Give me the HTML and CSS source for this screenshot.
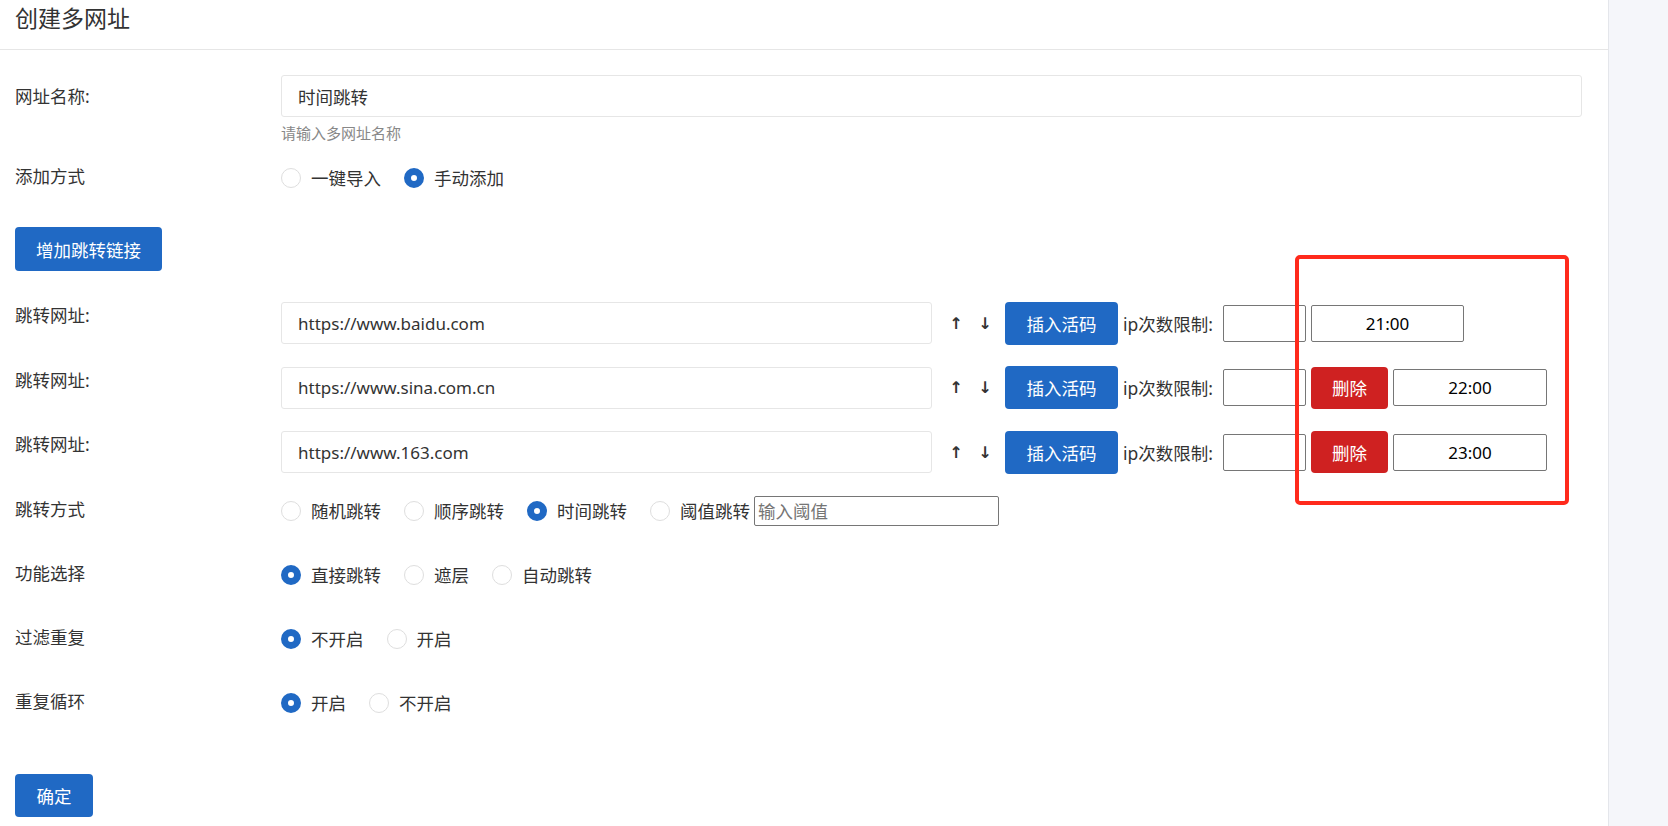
FILE: index.html
```html
<!DOCTYPE html>
<html lang="zh-CN">
<head>
    <meta charset="UTF-8">
    <meta name="viewport" content="width=device-width, initial-scale=1.0">
    <title>创建多网址</title>
    <link rel="stylesheet" href="styles.css">
</head>
<body>
    <div class="page">
        <div class="main">
            <div class="page-header">
                <h1>创建多网址</h1>
            </div>

            <form class="form">
                <div class="form-row row-name">
                    <label class="form-label" for="name">网址名称:</label>
                    <div class="form-field">
                        <input type="text" id="name" class="text-input name-input" value="时间跳转">
                        <div class="help">请输入多网址名称</div>
                    </div>
                </div>

                <div class="form-row row-radio">
                    <label class="form-label">添加方式</label>
                    <div class="radio-group">
                        <label class="radio"><input type="radio" name="mode">一键导入</label>
                        <label class="radio"><input type="radio" name="mode" checked>手动添加</label>
                    </div>
                </div>

                <div class="form-row row-add">
                    <button type="button" class="btn btn-blue btn-add">增加跳转链接</button>
                </div>

                <div class="form-row row-url">
                    <label class="form-label">跳转网址:</label>
                    <div class="url-line">
                        <input type="text" class="text-input url-input" value="https://www.baidu.com">
                        <div class="arrows"><span class="arrow">↑</span><span class="arrow">↓</span></div>
                        <button type="button" class="btn btn-blue">插入活码</button>
                        <span class="ip-label">ip次数限制:</span>
                        <input type="text" class="plain-input ip-input">
                        <input type="text" class="plain-input time-input time-first" value="21:00">
                    </div>
                </div>

                <div class="form-row row-url">
                    <label class="form-label">跳转网址:</label>
                    <div class="url-line">
                        <input type="text" class="text-input url-input" value="https://www.sina.com.cn">
                        <div class="arrows"><span class="arrow">↑</span><span class="arrow">↓</span></div>
                        <button type="button" class="btn btn-blue">插入活码</button>
                        <span class="ip-label">ip次数限制:</span>
                        <input type="text" class="plain-input ip-input">
                        <button type="button" class="btn btn-red">删除</button>
                        <input type="text" class="plain-input time-input" value="22:00">
                    </div>
                </div>

                <div class="form-row row-url">
                    <label class="form-label">跳转网址:</label>
                    <div class="url-line">
                        <input type="text" class="text-input url-input" value="https://www.163.com">
                        <div class="arrows"><span class="arrow">↑</span><span class="arrow">↓</span></div>
                        <button type="button" class="btn btn-blue">插入活码</button>
                        <span class="ip-label">ip次数限制:</span>
                        <input type="text" class="plain-input ip-input">
                        <button type="button" class="btn btn-red">删除</button>
                        <input type="text" class="plain-input time-input" value="23:00">
                    </div>
                </div>

                <div class="form-row row-radio">
                    <label class="form-label">跳转方式</label>
                    <div class="radio-group">
                        <label class="radio"><input type="radio" name="jump">随机跳转</label>
                        <label class="radio"><input type="radio" name="jump">顺序跳转</label>
                        <label class="radio"><input type="radio" name="jump" checked>时间跳转</label>
                        <label class="radio radio-last"><input type="radio" name="jump">阈值跳转</label>
                        <input type="text" class="plain-input limit-input" placeholder="输入阈值">
                    </div>
                </div>

                <div class="form-row row-radio">
                    <label class="form-label">功能选择</label>
                    <div class="radio-group">
                        <label class="radio"><input type="radio" name="func" checked>直接跳转</label>
                        <label class="radio"><input type="radio" name="func">遮层</label>
                        <label class="radio"><input type="radio" name="func">自动跳转</label>
                    </div>
                </div>

                <div class="form-row row-radio">
                    <label class="form-label">过滤重复</label>
                    <div class="radio-group">
                        <label class="radio"><input type="radio" name="filter" checked>不开启</label>
                        <label class="radio"><input type="radio" name="filter">开启</label>
                    </div>
                </div>

                <div class="form-row row-radio row-loop">
                    <label class="form-label">重复循环</label>
                    <div class="radio-group">
                        <label class="radio"><input type="radio" name="loop" checked>开启</label>
                        <label class="radio"><input type="radio" name="loop">不开启</label>
                    </div>
                </div>

                <button type="submit" class="btn btn-blue">确定</button>
            </form>

            <div class="annot"></div>
        </div>
        <div class="sidebar"></div>
    </div>
</body>
</html>
```

FILE: styles.css
```css
* {
    margin: 0;
    padding: 0;
    box-sizing: border-box;
}

body {
    font-family: "Noto Sans", "Noto Sans CJK SC", sans-serif;
    font-size: 17.5px;
    color: #333333;
    background-color: #ffffff;
}

.page {
    display: flex;
    height: 100vh;
    overflow: hidden;
}

.main {
    flex: 1;
    position: relative;
}

.sidebar {
    width: 60px;
    background-color: #f5f6fa;
    border-left: 1px solid #e4e6eb;
}

.page-header {
    height: 50px;
    padding: 0 15px;
    border-bottom: 1px solid #e6e6e6;
}

.page-header h1 {
    font-size: 23px;
    font-weight: normal;
    line-height: 36px;
    color: #333333;
}

.form {
    padding: 25px 26px 0 15px;
}

.form-row {
    display: flex;
    align-items: flex-start;
}

.form-label {
    width: 266px;
    flex-shrink: 0;
    line-height: 20px;
    padding-top: 3px;
}

.form-field {
    flex: 1;
}

/* inputs */
.text-input {
    height: 42px;
    padding: 0 16px;
    font: inherit;
    font-size: 17px;
    color: #333333;
    border: 1px solid #e6e6e6;
    border-radius: 3px;
    outline: none;
}

.name-input {
    width: 100%;
    font-size: 17.5px;
}

.help {
    margin-top: 6px;
    font-size: 15px;
    line-height: 20px;
    color: #888888;
}

.plain-input {
    height: 37px;
    padding: 0 3px;
    font: inherit;
    font-size: 17px;
    color: #000000;
    border: 1px solid #767676;
    border-radius: 2px;
    outline: none;
}

.plain-input::placeholder {
    color: #757575;
}

/* rows */
.row-name {
    margin-bottom: 20px;
}

.row-name .form-label {
    padding-top: 11px;
}

.row-radio {
    margin-bottom: 34px;
}

.row-loop {
    margin-bottom: 56px;
}

.row-add {
    margin-bottom: 31px;
}

.row-url {
    margin-bottom: 22.5px;
}

/* radios */
.radio-group {
    display: flex;
    align-items: center;
    height: 30px;
}

.radio {
    display: inline-flex;
    align-items: center;
    margin-right: 23px;
    line-height: 30px;
    white-space: nowrap;
}

.radio input {
    appearance: none;
    -webkit-appearance: none;
    width: 20px;
    height: 20px;
    margin-right: 10px;
    border: 1px solid #dedede;
    border-radius: 50%;
    background: #ffffff;
}

.radio input:checked {
    border: 7px solid #2069c4;
}

.radio-last {
    margin-right: 4px;
}

.limit-input {
    width: 245px;
    height: 30px;
    font-size: 17.5px;
}

/* buttons */
.btn {
    height: 43px;
    padding: 0 21.5px;
    font: inherit;
    color: #ffffff;
    border: none;
    border-radius: 4px;
    cursor: pointer;
    white-space: nowrap;
}

.btn-blue {
    background-color: #2069c4;
}

.btn-red {
    background-color: #cf2121;
}

.btn-add {
    height: 44px;
    padding: 0 21px;
}

/* jump url line */
.url-line {
    display: flex;
    align-items: center;
    height: 42px;
}

.url-input {
    width: 651px;
}

.arrows {
    display: flex;
    gap: 21px;
    padding: 0 16px 0 20px;
}

.arrow {
    width: 8px;
    display: flex;
    justify-content: center;
    font-family: "DejaVu Sans", sans-serif;
    font-size: 16px;
    font-weight: bold;
    color: #333333;
}

.ip-label {
    width: 100px;
    margin-left: 5px;
    white-space: nowrap;
}

.ip-input {
    width: 83px;
    margin-right: 5px;
}

.time-input {
    width: 154px;
    margin-left: 5px;
    text-align: center;
}

.time-first {
    width: 153px;
    margin-left: 0;
}

.btn-red {
    width: 77px;
    padding: 0;
    height: 42px;
}

/* red annotation box over the time column */
.annot {
    position: absolute;
    left: 1295px;
    top: 255px;
    width: 274px;
    height: 250px;
    border: 4px solid #ff2a1c;
    border-radius: 5px;
    pointer-events: none;
}
```
